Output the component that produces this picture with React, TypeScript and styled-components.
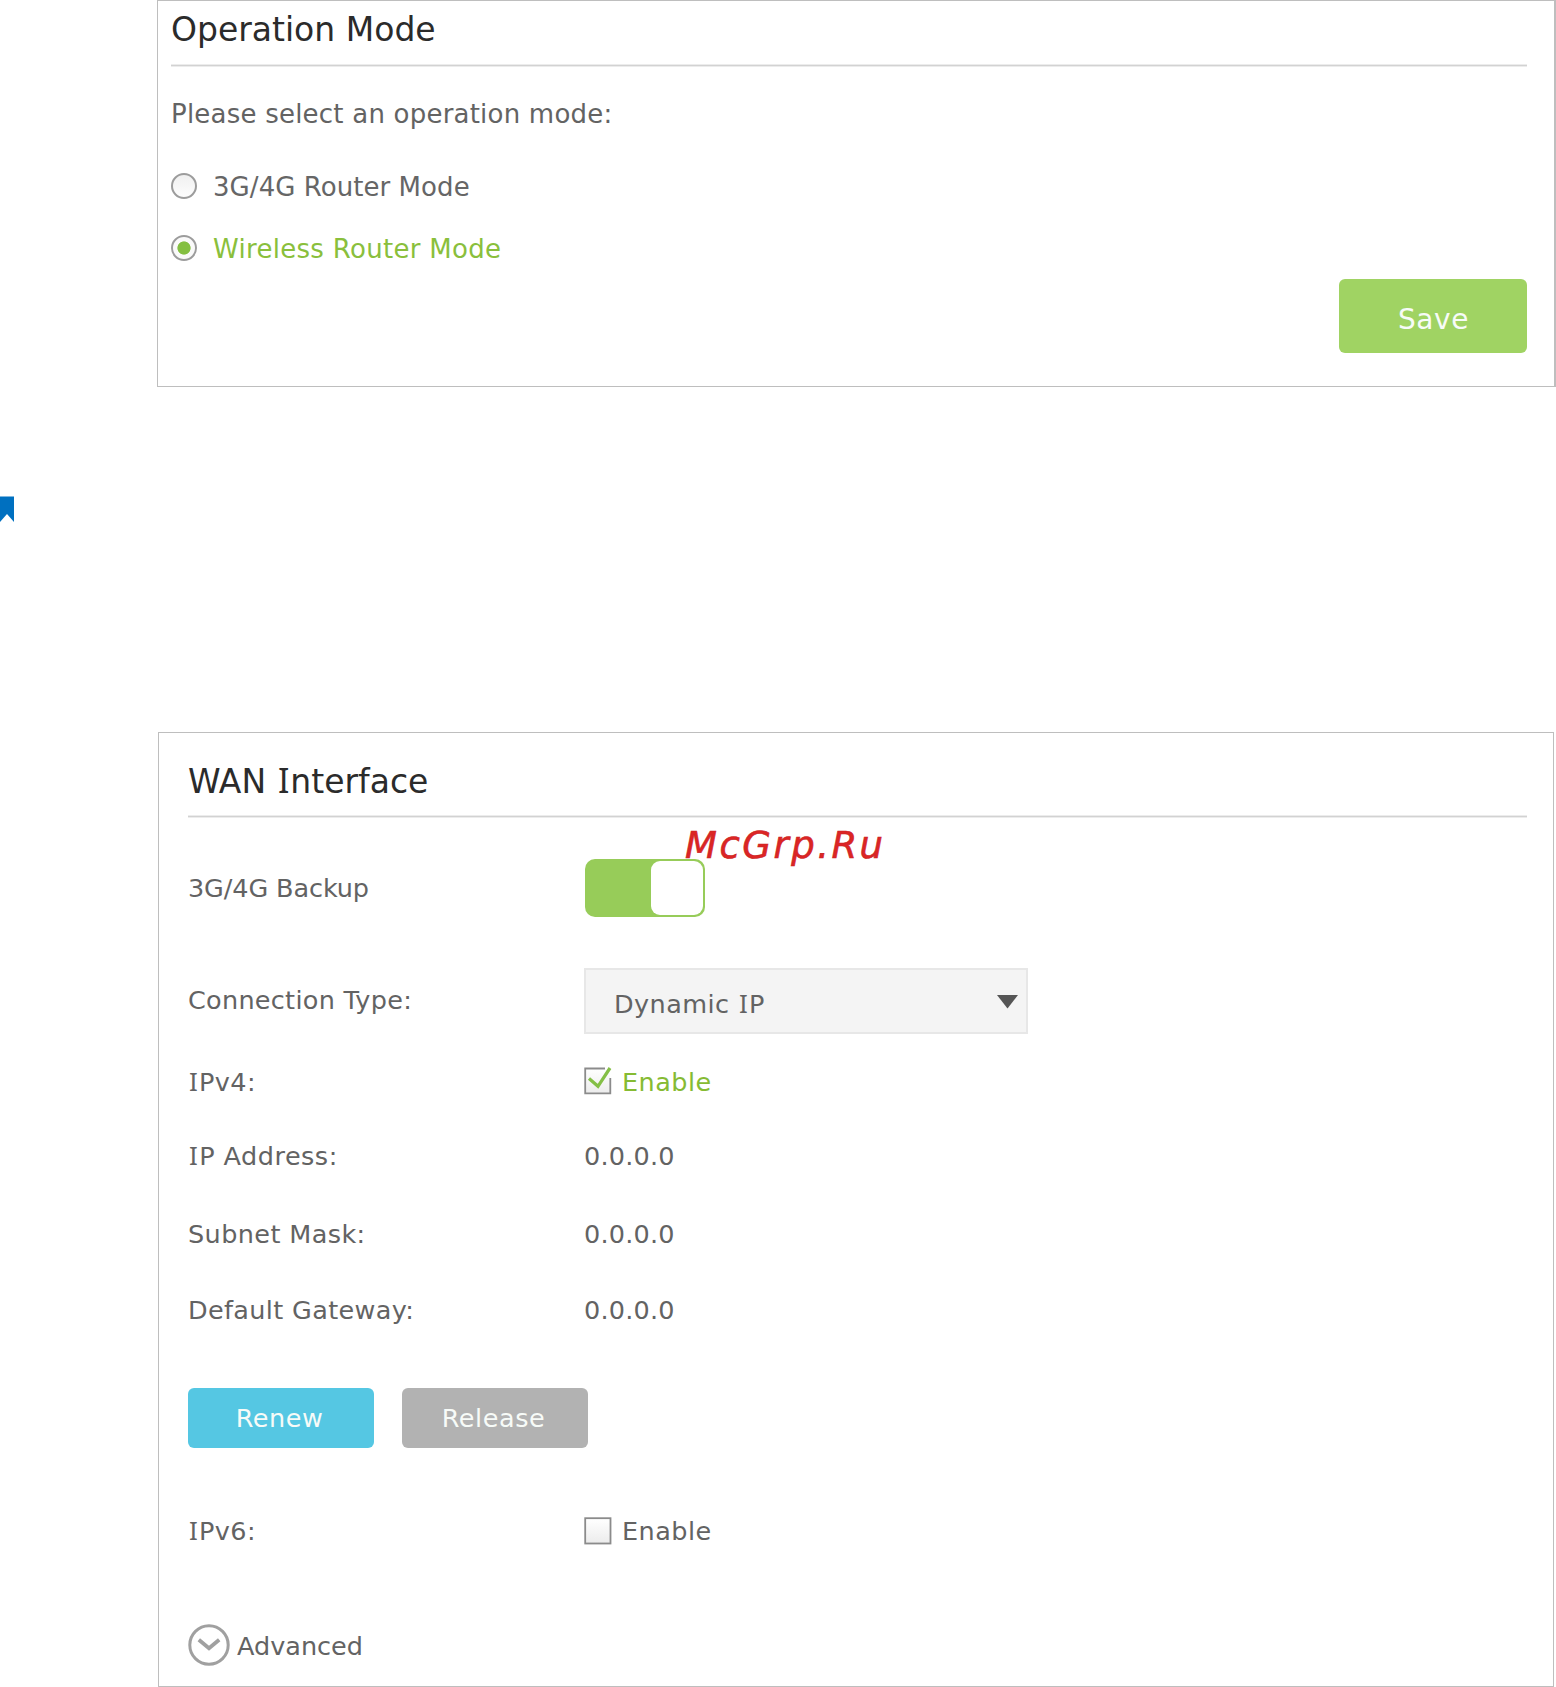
import React, { useState } from "react";
import styled, { createGlobalStyle, css } from "styled-components";

const GlobalStyle = createGlobalStyle`
  *, *::before, *::after { box-sizing: border-box; }
  body {
    margin: 0;
    background: #fff;
    font-family: "DejaVu Sans", Verdana, sans-serif;
    font-size: 25.5px;
    color: #636363;
  }
`;

/* The capital I of the interface font carries serifs. */
const serifCapital = css`
  &::first-letter {
    font-family: "Noto Sans", sans-serif;
    font-size: 1.02em;
    line-height: 0;
    margin: 0 0.03em 0 0.04em;
  }
`;

const Page = styled.div`
  position: relative;
  width: 1556px;
  height: 1687px;
  overflow: hidden;
  display: flex;
  flex-direction: column;
`;

const ModePanel = styled.section`
  width: 1399px;
  height: 387px;
  margin-left: 157px;
  padding: 0 27px 0 13px;
  border: 1px solid #bebebe;
  border-right-width: 2px;
  display: flex;
  flex-direction: column;
`;

const WanPanel = styled.section`
  width: 1396px;
  height: 955px;
  margin-left: 158px;
  padding: 0 26px 0 29px;
  border: 1px solid #bebebe;
  display: flex;
  flex-direction: column;
`;

const Title = styled.h2<{ $height: number; $top: number }>`
  height: ${(p) => p.$height}px;
  margin: 0;
  padding-top: ${(p) => p.$top}px;
  border-bottom: 1px solid #ececec;
  font-size: 33px;
  font-weight: 400;
  line-height: 40px;
  color: #2b2b2b;
  white-space: nowrap;
`;

const Rule = styled.div`
  height: 2px;
  flex: none;
  background: #d2d2d2;
  border-bottom: 1px solid #ececec;
`;

const Word = styled.span<{ $serif?: boolean }>`
  display: inline-block;
  ${(p) => p.$serif && serifCapital}
`;

const Prompt = styled.p`
  margin: 0;
  padding-top: 32px;
  height: 88px;
  font-size: 26px;
  line-height: 30px;
  letter-spacing: 0.22px;
`;

const RadioRow = styled.label<{ $active: boolean }>`
  height: 62px;
  padding-top: 2px;
  display: flex;
  align-items: center;
  gap: 16px;
  font-size: 26px;
  letter-spacing: ${(p) => (p.$active ? 0.3 : 0.06)}px;
  color: ${(p) => (p.$active ? "#8abf3c" : "#666")};
`;

const RadioDot = styled.span<{ $active: boolean }>`
  width: 26px;
  height: 26px;
  margin-top: ${(p) => (p.$active ? -2 : -3)}px;
  border: 2px solid #9c9c9c;
  border-radius: 50%;
  background: ${(p) =>
    p.$active
      ? "radial-gradient(circle, #84bf41 6.2px, #fafafa 7px)"
      : "linear-gradient(#f0f0f0, #fdfdfd)"};
`;

const Actions = styled.div`
  display: flex;
  justify-content: flex-end;
`;

const Button = styled.button<{ $tone: string }>`
  width: 186px;
  height: 60px;
  padding: 0 3px 1px 0;
  border: 0;
  border-radius: 6px;
  background: ${(p) => p.$tone};
  color: #f7fbf8;
  font: inherit;
  letter-spacing: 0.55px;
`;

const SaveButton = styled(Button)`
  width: 188px;
  height: 74px;
  padding: 6px 0 0 1px;
  font-size: 28px;
  letter-spacing: 0.6px;
`;

const Margin = styled.div`
  height: 345px;
  padding-top: 109px;
`;

const Bookmark = styled.svg`
  display: block;
`;

const Field = styled.div<{ $height: number }>`
  height: ${(p) => p.$height}px;
  display: grid;
  grid-template-columns: 396px 1fr;
  align-items: center;
`;

const Label = styled.div<{ $spacing?: number; $serif?: boolean; $lift?: number }>`
  line-height: 30px;
  padding-bottom: ${(p) => p.$lift ?? 2}px;
  letter-spacing: ${(p) => p.$spacing ?? 0}px;
  white-space: nowrap;
  ${(p) => p.$serif && serifCapital}
`;

const Value = styled.div`
  padding-bottom: 2px;
  line-height: 30px;
  letter-spacing: 0.22px;
`;

const Switch = styled.button`
  width: 120px;
  height: 58px;
  margin-left: 1px;
  padding: 2px;
  border: 0;
  border-radius: 10px;
  background: #97cc59;
  display: flex;
  justify-content: flex-end;
`;

const Knob = styled.span`
  width: 52px;
  height: 54px;
  border-radius: 9px;
  background: #fff;
`;

const SelectBox = styled.div`
  width: 444px;
  height: 66px;
  padding: 6px 8px 0 28px;
  border: 2px solid #e7e7e7;
  background: #f4f4f4;
  display: flex;
  justify-content: space-between;
  letter-spacing: 0.42px;
  line-height: 56px;
`;

const Arrow = styled.svg`
  margin-top: 19px;
`;

const CheckLabel = styled.label<{ $active: boolean }>`
  display: flex;
  align-items: center;
  gap: 10px;
  letter-spacing: 0.45px;
  color: ${(p) => (p.$active ? "#86bb33" : "#636363")};

  svg {
    flex: none;
    margin-top: ${(p) => (p.$active ? -3 : -1)}px;
  }
`;

const ButtonRow = styled.div`
  height: 144px;
  display: flex;
  align-items: center;
  gap: 28px;
`;

const Advanced = styled.div`
  padding-top: 52px;
  display: flex;
  gap: 7px;
  line-height: 45px;
`;

const Watermark = styled.div`
  position: absolute;
  left: 685px;
  top: 820px;
  font-size: 37px;
  font-style: oblique;
  line-height: 51px;
  letter-spacing: 2.5px;
  color: #dc2525;
  -webkit-text-stroke: 0.6px #c92222;
`;

function CheckBox({ checked }: { checked: boolean }) {
  return (
    <svg width="28" height="28" viewBox="0 0 28 28" fill="none">
      <defs>
        <linearGradient id="boxFill" x1="0" y1="0" x2="0" y2="1">
          <stop offset="0" stopColor="#fff" />
          <stop offset="1" stopColor="#ececec" />
        </linearGradient>
      </defs>
      <rect x="2" y="2" width="24" height="24" fill="url(#boxFill)" />
      {checked ? (
        <>
          <path d="M21 1.5H1.2V26.3H26.3V11" stroke="#8b8b8b" strokeWidth="1.8" />
          <path d="M5 11.5L14 19.3L26 1" stroke="#84bf46" strokeWidth="3.2" />
        </>
      ) : (
        <rect x="1.2" y="1.2" width="25.3" height="25.3" stroke="#8b8b8b" strokeWidth="1.8" />
      )}
    </svg>
  );
}

const modes = ["3G/4G Router Mode", "Wireless Router Mode"];

const addresses = [
  { label: "IP Address:", height: 74, spacing: 0.5, serif: true },
  { label: "Subnet Mask:", height: 82, spacing: 0.4, serif: false },
  { label: "Default Gateway:", height: 70, spacing: 0.35, serif: false },
];

export default function App() {
  const [mode, setMode] = useState(modes[1]);
  return (
    <>
      <GlobalStyle />
      <Page>
        <ModePanel>
          <Title $height={64} $top={9}>Operation Mode</Title>
          <Rule />
          <Prompt>Please select an operation mode:</Prompt>
          {modes.map((name) => (
            <RadioRow key={name} $active={name === mode} onClick={() => setMode(name)}>
              <RadioDot $active={name === mode} />
              {name}
            </RadioRow>
          ))}
          <Actions>
            <SaveButton $tone="#a0d363">Save</SaveButton>
          </Actions>
        </ModePanel>

        <Margin>
          <Bookmark width="14" height="26" viewBox="0 0 14 26">
            <path d="M0 .5H14V26L7 18L0 26Z" fill="#0070c0" />
          </Bookmark>
        </Margin>

        <WanPanel>
          <Title $height={83} $top={29}>
            <Word>WAN</Word> <Word $serif>Interface</Word>
          </Title>
          <Rule />
          <Field $height={140}>
            <Label $spacing={-0.1} $lift={0}>3G/4G Backup</Label>
            <Switch aria-pressed="true">
              <Knob />
            </Switch>
          </Field>
          <Field $height={86}>
            <Label $spacing={0.28} $lift={3}>Connection Type:</Label>
            <SelectBox>
              <span>
                <Word>Dynamic</Word> <Word $serif>IP</Word>
              </span>
              <Arrow width="21" height="14" viewBox="0 0 21 14">
                <path d="M0 0H21L10.5 13.5Z" fill="#555" />
              </Arrow>
            </SelectBox>
          </Field>
          <Field $height={76}>
            <Label $spacing={0.4} $lift={1} $serif>IPv4:</Label>
            <CheckLabel $active>
              <CheckBox checked />
              Enable
            </CheckLabel>
          </Field>
          {addresses.map((row) => (
            <Field key={row.label} $height={row.height}>
              <Label $spacing={row.spacing} $serif={row.serif}>{row.label}</Label>
              <Value>0.0.0.0</Value>
            </Field>
          ))}
          <ButtonRow>
            <Button $tone="#55c7e3">Renew</Button>
            <Button $tone="#b2b2b2">Release</Button>
          </ButtonRow>
          <Field $height={82}>
            <Label $spacing={0.4} $lift={1} $serif>IPv6:</Label>
            <CheckLabel $active={false}>
              <CheckBox checked={false} />
              Enable
            </CheckLabel>
          </Field>
          <Advanced>
            <svg width="42" height="42" viewBox="0 0 42 42" fill="none" stroke="#a0a0a0">
              <circle cx="21" cy="21" r="19.2" strokeWidth="3" />
              <path d="M10.8 15.8L21 24.3L31.2 15.8" strokeWidth="3.8" />
            </svg>
            Advanced
          </Advanced>
        </WanPanel>
        <Watermark>McGrp.Ru</Watermark>
      </Page>
    </>
  );
}
